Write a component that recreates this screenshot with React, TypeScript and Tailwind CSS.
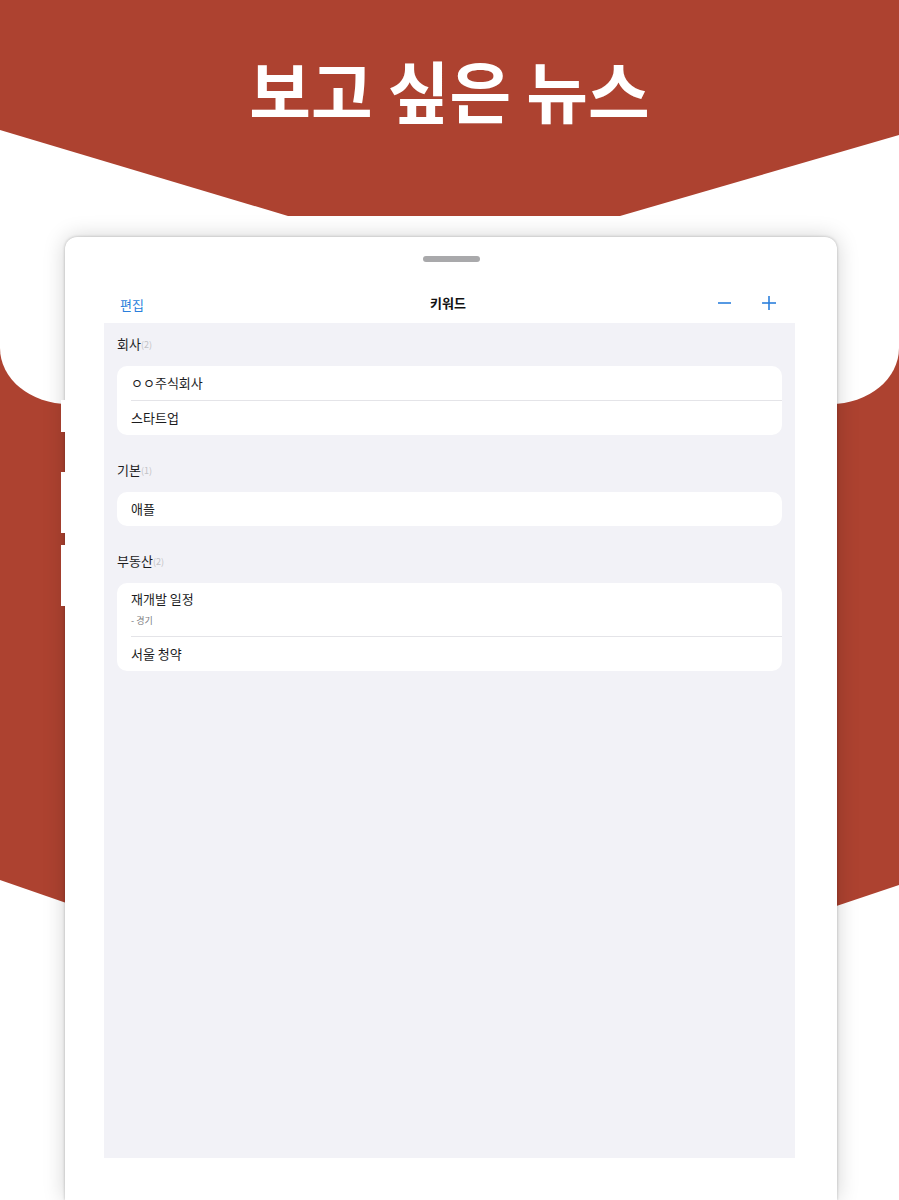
import React from 'react';

type Item = { title: string; sub?: string };
type Section = { name: string; items: Item[] };

const sections: Section[] = [
  { name: '회사', items: [{ title: 'ㅇㅇ주식회사' }, { title: '스타트업' }] },
  { name: '기본', items: [{ title: '애플' }] },
  { name: '부동산', items: [{ title: '재개발 일정', sub: '- 경기' }, { title: '서울 청약' }] },
];

const RED = '#ad4230';

const Backdrop: React.FC = () => (
  <svg className="absolute inset-0" width="899" height="1200" viewBox="0 0 899 1200">
    <polygon points="0,330 899,330 899,885 450,1036 0,880" fill={RED} />
    <rect x="0" y="0" width="899" height="404" rx="68" ry="56" fill="#ffffff" />
    <polygon points="0,0 899,0 899,135 620,216 288,216 0,130" fill={RED} />
  </svg>
);

const Row: React.FC<{ item: Item; last: boolean }> = ({ item, last }) => (
  <div>
    {item.sub ? (
      <div className="h-[53px] pl-[14px] pt-[6px] flex flex-col">
        <span className="text-[13px] leading-[20px] text-[#1c1c1e]">{item.title}</span>
        <span className="mt-[6px] text-[9px] leading-[12px] text-[#7a7a7e]">{item.sub}</span>
      </div>
    ) : (
      <div className="h-[34px] pl-[14px] flex items-center text-[13px] text-[#1c1c1e]">{item.title}</div>
    )}
    {!last && <div className="ml-[14px] h-px bg-[#e4e4e8]" />}
  </div>
);

const SectionBlock: React.FC<{ section: Section; first: boolean }> = ({ section, first }) => (
  <div className={first ? '' : 'mt-[25px]'}>
    <div className="h-[20px] px-[13px] flex items-center">
      <span className="text-[13px] text-[#1c1c1e]">{section.name}</span>
      <span className="text-[9px] text-[#c2c2c6] pt-[2px]">({section.items.length})</span>
    </div>
    <div className="mt-[12px] mx-[13px] bg-white rounded-[10px] overflow-hidden">
      {section.items.map((it, i) => (
        <Row key={it.title} item={it} last={i === section.items.length - 1} />
      ))}
    </div>
  </div>
);

const App: React.FC = () => {
  return (
    <div className="relative w-[899px] h-[1200px] overflow-hidden bg-white font-['Noto_Sans_CJK_KR','Noto_Sans',sans-serif]">
      <Backdrop />

      <div className="relative flex flex-col">
        {/* Headline */}
        <h1 className="pt-[55px] text-center text-[67px] leading-none font-bold text-white">보고 싶은 뉴스</h1>

        {/* Device sheet */}
        <div className="relative mt-[115px] ml-[65px] w-[772px] h-[963px] bg-white rounded-t-[12px] shadow-[0_0_3px_rgba(0,0,0,0.25),0_0_22px_rgba(0,0,0,0.18)]">
          {/* side buttons */}
          <div className="absolute -left-[4px] top-[163px] w-[4px] h-[32px] bg-white" />
          <div className="absolute -left-[4px] top-[235px] w-[4px] h-[61px] bg-white" />
          <div className="absolute -left-[4px] top-[308px] w-[4px] h-[61px] bg-white" />

          <div className="pt-[19px] flex justify-center">
            <div className="w-[57px] h-[6px] rounded-full bg-[#a9a9ab]" />
          </div>

          {/* Nav bar */}
          <div className="mt-[20px] h-[41px] pl-[55px] pr-[61px] flex items-center">
            <div className="flex-1">
              <span className="text-[13px] text-[#2b7fdc]">편집</span>
            </div>
            <span className="text-[13px] font-bold text-[#111]">키워드</span>
            <div className="flex-1 flex justify-end items-center gap-[31px]">
              <svg width="13" height="14" viewBox="0 0 13 14">
                <line x1="0" y1="7" x2="13" y2="7" stroke="#2b7fdc" strokeWidth="1.6" />
              </svg>
              <svg width="14" height="14" viewBox="0 0 14 14">
                <line x1="0" y1="7" x2="14" y2="7" stroke="#2b7fdc" strokeWidth="1.6" />
                <line x1="7" y1="0" x2="7" y2="14" stroke="#2b7fdc" strokeWidth="1.6" />
              </svg>
            </div>
          </div>

          {/* List */}
          <div className="ml-[39px] w-[691px] h-[835px] bg-[#f2f2f7] pt-[11px]">
            {sections.map((s, i) => (
              <SectionBlock key={s.name} section={s} first={i === 0} />
            ))}
          </div>
        </div>
      </div>
    </div>
  );
};

export default App;
